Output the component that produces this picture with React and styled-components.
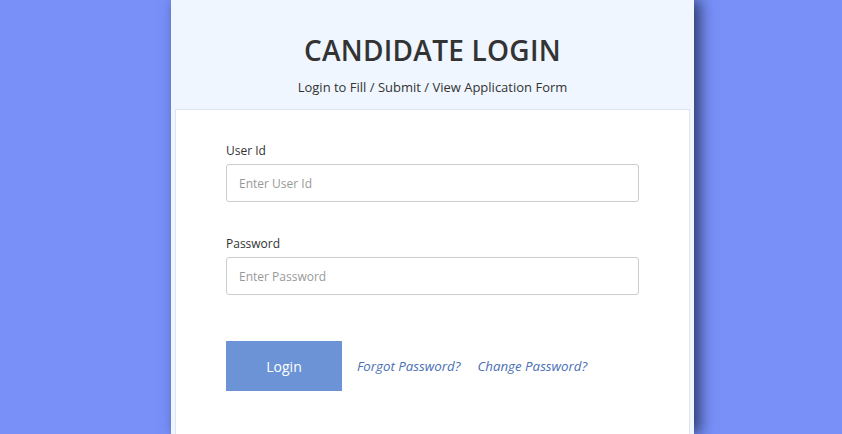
import React from 'react';
import styled, { createGlobalStyle } from 'styled-components';

const Global = createGlobalStyle`
  html, body {
    margin: 0;
    padding: 0;
    height: 100%;
    background: #7890f8;
    font-family: "Open Sans", "Liberation Sans", sans-serif;
    overflow: hidden;
  }
`;

const Page = styled.div`
  height: 434px;
  padding-left: 171px;
`;

const Card = styled.div`
  width: 523px;
  height: 434px;
  background: #f0f6ff;
  box-shadow: 6px 0 14px rgba(20, 30, 60, 0.75);
  display: flex;
  flex-direction: column;
`;

const Header = styled.div`
  text-align: center;
  padding: 31px 0 13px;
`;

const Title = styled.h1`
  margin: 0;
  font-size: 28px;
  font-weight: 600;
  letter-spacing: 0.25px;
  color: #333;
  line-height: 38px;
`;

const Subtitle = styled.p`
  margin: 9px 0 0;
  font-size: 13px;
  color: #333;
  line-height: 18px;
`;

const Panel = styled.div`
  flex: 1;
  margin: 0 4px;
  background: #fff;
  border: 1px solid #dfe5ec;
  border-bottom: none;
  padding: 32px 50px 0;
`;

const Field = styled.div`
  margin-bottom: 33px;
`;

const Label = styled.label`
  display: block;
  font-size: 12px;
  color: #333;
  line-height: 18px;
  margin-bottom: 4px;
`;

const Input = styled.input`
  box-sizing: border-box;
  width: 413px;
  height: 38px;
  border: 1px solid #ccc;
  border-radius: 3px;
  padding: 0 12px;
  font-family: "Open Sans", "Liberation Sans", sans-serif;
  font-size: 12px;
  color: #333;
  outline: none;
  &::placeholder {
    color: #999;
  }
`;

const Actions = styled.div`
  display: flex;
  align-items: center;
  gap: 15px;
  margin-top: 46px;
`;

const Button = styled.button`
  width: 116px;
  height: 50px;
  border: none;
  background: #6b93d6;
  color: #fff;
  font-family: "Open Sans", "Liberation Sans", sans-serif;
  font-size: 14px;
  cursor: pointer;
`;

const Link = styled.a`
  font-size: 13.3px;
  font-style: italic;
  color: #4a6fb5;
  text-decoration: none;
  & + & {
    margin-left: 2px;
  }
`;

export default function App() {
  return (
    <>
      <Global />
      <Page>
        <Card>
          <Header>
            <Title>CANDIDATE LOGIN</Title>
            <Subtitle>Login to Fill / Submit / View Application Form</Subtitle>
          </Header>
          <Panel>
            <Field>
              <Label>User Id</Label>
              <Input placeholder="Enter User Id" />
            </Field>
            <Field>
              <Label>Password</Label>
              <Input type="password" placeholder="Enter Password" />
            </Field>
            <Actions>
              <Button>Login</Button>
              <Link href="#">Forgot Password?</Link>
              <Link href="#">Change Password?</Link>
            </Actions>
          </Panel>
        </Card>
      </Page>
    </>
  );
}
